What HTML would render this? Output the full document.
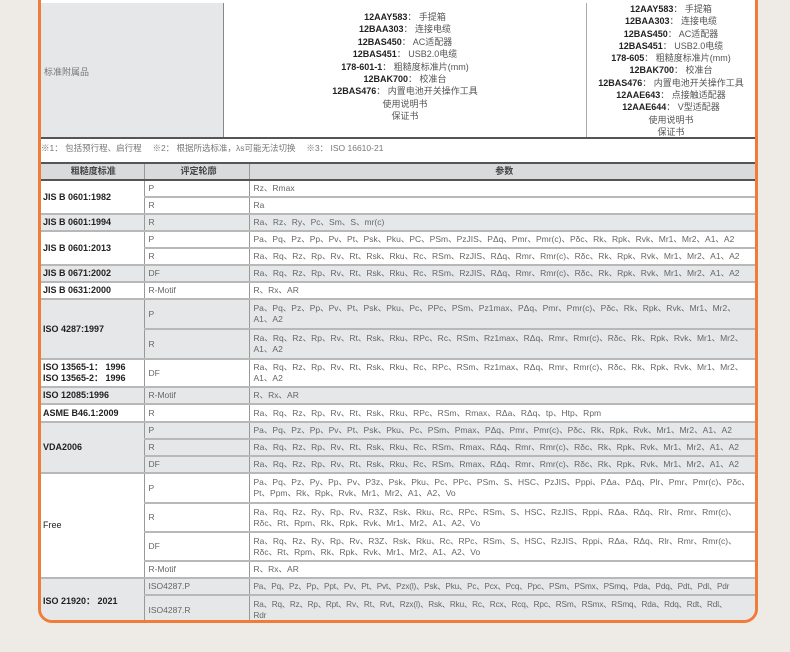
<!DOCTYPE html>
<html><head><meta charset="utf-8"><style>
*{margin:0;padding:0;box-sizing:border-box}
body{width:790px;height:652px;background:#eeebe6;position:relative;overflow:hidden;font-family:"Liberation Sans","Noto Sans CJK SC",sans-serif;color:#555}
.card{position:absolute;left:38px;top:-20px;width:720px;height:643px;border:3px solid #f07c3a;border-radius:0 0 14px 14px;background:#fff;overflow:hidden}
.in{position:absolute;left:0;top:20px;width:714px}
.lab{position:absolute;left:0;top:0;width:183px;height:135px;background:#e6e7e9;border-right:1px solid #888;font-size:9px;color:#777;padding:62px 0 0 3px}
.mid{position:absolute;left:183px;top:0;width:363px;height:135px;border-right:1px solid #aaa;font-size:9px;line-height:12.4px;text-align:center;padding-top:8px}
.rt{position:absolute;left:546px;top:0;width:168px;height:135px;font-size:9px;line-height:12.3px;text-align:center}
b{color:#222;font-weight:bold}
.bl{position:absolute;left:0;top:134px;width:714px;height:2px;background:#555}
.fn{position:absolute;left:0;top:139px;font-size:8.5px;color:#777;white-space:nowrap}
table{position:absolute;left:0;top:159px;width:714px;border-collapse:collapse;table-layout:fixed}
td{font-size:8.5px;white-space:nowrap;overflow:hidden;border-bottom:2px solid #b8b8b8;border-left:1px solid #999;padding:0 0 0 4px;line-height:11px;vertical-align:middle;color:#666}
td.s{border-left:none;font-weight:bold;color:#222;font-size:9px;padding-left:2px}
tr.h td{background:#d9dadc;border-top:2px solid #555;border-bottom:2px solid #555;text-align:center;font-weight:bold;color:#444;font-size:9px}
.g td{background:#e6e7e9}
.t{letter-spacing:-0.15px}
</style></head><body>
<div class="card"><div class="in">
<div class="lab">标准附属品</div>
<div class="mid">
<b>12AAY583</b>： 手提箱<br><b>12BAA303</b>： 连接电缆<br><b>12BAS450</b>： AC适配器<br><b>12BAS451</b>： USB2.0电缆<br><b>178-601-1</b>： 粗糙度标准片(mm)<br><b>12BAK700</b>： 校准台<br><b>12BAS476</b>： 内置电池开关操作工具<br>使用说明书<br>保证书</div>
<div class="rt">
<b>12AAY583</b>： 手提箱<br><b>12BAA303</b>： 连接电缆<br><b>12BAS450</b>： AC适配器<br><b>12BAS451</b>： USB2.0电缆<br><b>178-605</b>： 粗糙度标准片(mm)<br><b>12BAK700</b>： 校准台<br><b>12BAS476</b>： 内置电池开关操作工具<br><b>12AAE643</b>： 点接触适配器<br><b>12AAE644</b>： V型适配器<br>使用说明书<br>保证书</div>
<div class="bl"></div>
<div class="fn">※1： 包括预行程、启行程　 ※2： 根据所选标准，λs可能无法切换　 ※3： ISO 16610-21</div>
<table>
<colgroup><col style="width:103px"><col style="width:105px"><col style="width:506px"></colgroup>
<tr class="h" style="height:17px"><td class="s" style="color:#444">粗糙度标准</td><td>评定轮廓</td><td>参数</td></tr>
<tr style="height:17px"><td class="s" rowspan="2">JIS B 0601:1982</td><td>P</td><td>Rz、Rmax</td></tr>
<tr style="height:17px"><td>R</td><td>Ra</td></tr>
<tr class="g" style="height:17px"><td class="s">JIS B 0601:1994</td><td>R</td><td>Ra、Rz、Ry、Pc、Sm、S、mr(c)</td></tr>
<tr style="height:17px"><td class="s" rowspan="2">JIS B 0601:2013</td><td>P</td><td>Pa、Pq、Pz、Pp、Pv、Pt、Psk、Pku、PC、PSm、PzJIS、PΔq、Pmr、Pmr(c)、Pδc、Rk、Rpk、Rvk、Mr1、Mr2、A1、A2</td></tr>
<tr style="height:17px"><td>R</td><td>Ra、Rq、Rz、Rp、Rv、Rt、Rsk、Rku、Rc、RSm、RzJIS、RΔq、Rmr、Rmr(c)、Rδc、Rk、Rpk、Rvk、Mr1、Mr2、A1、A2</td></tr>
<tr class="g" style="height:17px"><td class="s">JIS B 0671:2002</td><td>DF</td><td>Ra、Rq、Rz、Rp、Rv、Rt、Rsk、Rku、Rc、RSm、RzJIS、RΔq、Rmr、Rmr(c)、Rδc、Rk、Rpk、Rvk、Mr1、Mr2、A1、A2</td></tr>
<tr style="height:17px"><td class="s">JIS B 0631:2000</td><td>R-Motif</td><td>R、Rx、AR</td></tr>
<tr class="g" style="height:30px"><td class="s" rowspan="2">ISO 4287:1997</td><td>P</td><td>Pa、Pq、Pz、Pp、Pv、Pt、Psk、Pku、Pc、PPc、PSm、Pz1max、PΔq、Pmr、Pmr(c)、Pδc、Rk、Rpk、Rvk、Mr1、Mr2、<br>A1、A2</td></tr>
<tr class="g" style="height:30px"><td>R</td><td>Ra、Rq、Rz、Rp、Rv、Rt、Rsk、Rku、RPc、Rc、RSm、Rz1max、RΔq、Rmr、Rmr(c)、Rδc、Rk、Rpk、Rvk、Mr1、Mr2、<br>A1、A2</td></tr>
<tr style="height:28px"><td class="s">ISO 13565-1： 1996<br>ISO 13565-2： 1996</td><td>DF</td><td>Ra、Rq、Rz、Rp、Rv、Rt、Rsk、Rku、Rc、RPc、RSm、Rz1max、RΔq、Rmr、Rmr(c)、Rδc、Rk、Rpk、Rvk、Mr1、Mr2、<br>A1、A2</td></tr>
<tr class="g" style="height:17px"><td class="s">ISO 12085:1996</td><td>R-Motif</td><td>R、Rx、AR</td></tr>
<tr style="height:18px"><td class="s">ASME B46.1:2009</td><td>R</td><td>Ra、Rq、Rz、Rp、Rv、Rt、Rsk、Rku、RPc、RSm、Rmax、RΔa、RΔq、tp、Htp、Rpm</td></tr>
<tr class="g" style="height:17px"><td class="s" rowspan="3">VDA2006</td><td>P</td><td>Pa、Pq、Pz、Pp、Pv、Pt、Psk、Pku、Pc、PSm、Pmax、PΔq、Pmr、Pmr(c)、Pδc、Rk、Rpk、Rvk、Mr1、Mr2、A1、A2</td></tr>
<tr class="g" style="height:17px"><td>R</td><td>Ra、Rq、Rz、Rp、Rv、Rt、Rsk、Rku、Rc、RSm、Rmax、RΔq、Rmr、Rmr(c)、Rδc、Rk、Rpk、Rvk、Mr1、Mr2、A1、A2</td></tr>
<tr class="g" style="height:17px"><td>DF</td><td>Ra、Rq、Rz、Rp、Rv、Rt、Rsk、Rku、Rc、RSm、Rmax、RΔq、Rmr、Rmr(c)、Rδc、Rk、Rpk、Rvk、Mr1、Mr2、A1、A2</td></tr>
<tr style="height:30px"><td class="s" rowspan="4" style="font-weight:normal">Free</td><td>P</td><td>Pa、Pq、Pz、Py、Pp、Pv、P3z、Psk、Pku、Pc、PPc、PSm、S、HSC、PzJIS、Pppi、PΔa、PΔq、Plr、Pmr、Pmr(c)、Pδc、<br>Pt、Ppm、Rk、Rpk、Rvk、Mr1、Mr2、A1、A2、Vo</td></tr>
<tr style="height:29px"><td>R</td><td>Ra、Rq、Rz、Ry、Rp、Rv、R3Z、Rsk、Rku、Rc、RPc、RSm、S、HSC、RzJIS、Rppi、RΔa、RΔq、Rlr、Rmr、Rmr(c)、<br>Rδc、Rt、Rpm、Rk、Rpk、Rvk、Mr1、Mr2、A1、A2、Vo</td></tr>
<tr style="height:29px"><td>DF</td><td>Ra、Rq、Rz、Ry、Rp、Rv、R3Z、Rsk、Rku、Rc、RPc、RSm、S、HSC、RzJIS、Rppi、RΔa、RΔq、Rlr、Rmr、Rmr(c)、<br>Rδc、Rt、Rpm、Rk、Rpk、Rvk、Mr1、Mr2、A1、A2、Vo</td></tr>
<tr style="height:17px"><td>R-Motif</td><td>R、Rx、AR</td></tr>
<tr class="g" style="height:17px"><td class="s" rowspan="2">ISO 21920： 2021</td><td>ISO4287.P</td><td class="t" style="font-size:8.2px">Pa、Pq、Pz、Pp、Ppt、Pv、Pt、Pvt、Pzx(l)、Psk、Pku、Pc、Pcx、Pcq、Ppc、PSm、PSmx、PSmq、Pda、Pdq、Pdt、Pdl、Pdr</td></tr>
<tr class="g" style="height:30px"><td>ISO4287.R</td><td class="t" style="font-size:8.2px">Ra、Rq、Rz、Rp、Rpt、Rv、Rt、Rvt、Rzx(l)、Rsk、Rku、Rc、Rcx、Rcq、Rpc、RSm、RSmx、RSmq、Rda、Rdq、Rdt、Rdl、<br>Rdr</td></tr>
</table>
</div></div>
</body></html>
